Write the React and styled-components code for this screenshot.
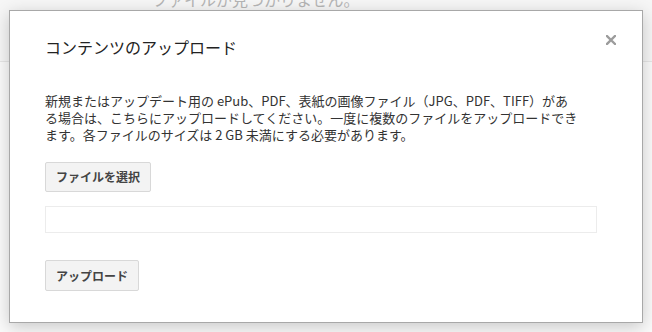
import React from "react";
import styled, { createGlobalStyle } from "styled-components";

const Global = createGlobalStyle`
  html, body { margin: 0; padding: 0; }
  body {
    background: #fafafa;
    font-family: "Noto Sans CJK JP", "Noto Sans", sans-serif;
    width: 652px;
    height: 332px;
    overflow: hidden;
  }
`;

const Page = styled.div`
  position: relative;
  width: 652px;
  height: 332px;
  overflow: hidden;
`;

const TopBar = styled.div`
  height: 62px;
  background: #f6f6f6;
  border-bottom: 1px solid #e6e6e6;
  box-sizing: border-box;
  display: flex;
  align-items: flex-start;
  padding-left: 152px;
`;

const BgText = styled.span`
  font-size: 16px;
  line-height: 20px;
  color: #b5b5b5;
  margin-top: -11px;
`;

const Dialog = styled.div`
  position: absolute;
  left: 9px;
  top: 10px;
  width: 634px;
  height: 313px;
  box-sizing: border-box;
  background: #fff;
  border: 1px solid #a8a8a8;
  box-shadow: 0 4px 16px rgba(0, 0, 0, 0.2);
  padding: 26px 45px 0 35px;
  display: flex;
  flex-direction: column;
  align-items: flex-start;
`;

const Title = styled.h2`
  margin: 0;
  font-size: 16px;
  line-height: 20px;
  font-weight: 400;
  color: #222;
`;

const Close = styled.button`
  position: absolute;
  right: 26px;
  top: 24px;
  width: 10px;
  height: 10px;
  padding: 0;
  border: 0;
  background: none;
  display: flex;
  cursor: pointer;
`;

const Body = styled.p`
  margin: 35px 0 0;
  font-size: 13px;
  line-height: 17px;
  color: #333;
`;

const Button = styled.button`
  font-family: inherit;
  font-size: 12px;
  font-weight: 700;
  color: #444;
  background: #f3f3f3;
  border: 1px solid #d8d8d8;
  border-radius: 2px;
  height: ${(p) => p.$h || 30}px;
  padding: 0 10px;
  margin-top: ${(p) => p.$mt}px;
  line-height: 1;
  box-sizing: border-box;
`;

const FileBox = styled.div`
  margin-top: 14px;
  width: 552px;
  height: 27px;
  box-sizing: border-box;
  border: 1px solid #ececec;
  background: #fff;
`;

export default function App() {
  return (
    <Page>
      <Global />
      <TopBar>
        <BgText>ファイルが見つかりません。</BgText>
      </TopBar>
      <Dialog>
        <Title>コンテンツのアップロード</Title>
        <Close aria-label="閉じる">
          <svg width="10" height="10" viewBox="0 0 10 10">
            <path d="M1 1L9 9M9 1L1 9" stroke="#9c9c9c" strokeWidth="2.4" strokeLinecap="square" />
          </svg>
        </Close>
        <Body>
          新規またはアップデート用の ePub、PDF、表紙の画像ファイル（JPG、PDF、TIFF）があ
          <br />
          る場合は、こちらにアップロードしてください。一度に複数のファイルをアップロードでき
          <br />
          ます。各ファイルのサイズは 2 GB 未満にする必要があります。
        </Body>
        <Button $mt={19}>ファイルを選択</Button>
        <FileBox />
        <Button $mt={27} $h={31}>アップロード</Button>
      </Dialog>
    </Page>
  );
}
